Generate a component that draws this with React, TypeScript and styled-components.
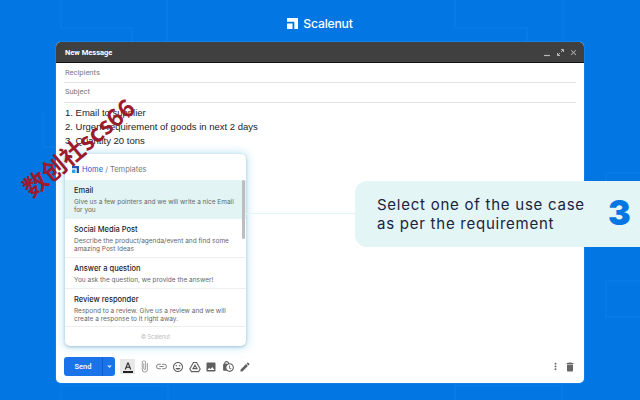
import React from "react";
import styled, { createGlobalStyle } from "styled-components";
import {
  MdArrowDropDown,
  MdAttachFile,
  MdClose,
  MdCreate,
  MdDelete,
  MdFormatColorText,
  MdInsertEmoticon,
  MdLink,
  MdLockClock,
  MdMoreVert,
  MdPhoto,
} from "react-icons/md";

const GlobalStyle = createGlobalStyle`
  html, body { margin: 0; padding: 0; }
  body { width: 640px; height: 400px; overflow: hidden; background: #0277e4; }
`;

const Page = styled.div`
  position: relative;
  width: 640px;
  height: 400px;
  overflow: hidden;
  background: #0277e4;
  display: flex;
  flex-direction: column;
  align-items: center;
  font-family: "Liberation Sans", Arial, sans-serif;
`;

const Pattern = styled.svg`
  position: absolute;
  inset: 0;
`;

const Brand = styled.div`
  position: relative;
  height: 42px;
  display: flex;
  align-items: center;
  gap: 5px;
  padding-top: 5px;
  box-sizing: border-box;
  color: #fff;
  font: 500 12.2px "Inter", sans-serif;
  letter-spacing: -0.2px;
`;

const Compose = styled.div`
  position: relative;
  width: 528px;
  height: 341px;
  background: #fff;
  border-radius: 5px;
  box-shadow: 0 0 1px rgba(210, 235, 250, 0.8);
  display: flex;
  flex-direction: column;
`;

const TitleBar = styled.div`
  height: 20px;
  background: #404040;
  border-bottom: 1px solid #111;
  border-radius: 5px 5px 0 0;
  display: flex;
  align-items: center;
  justify-content: space-between;
  padding: 0 6px 0 9px;
  color: #fff;
  font: 700 7.5px "Roboto", sans-serif;
`;

const WindowControls = styled.div`
  display: flex;
  align-items: center;
  gap: 4px;
  color: #b8b8b8;
`;

const FieldRow = styled.div`
  margin: 0 8px;
  padding-left: 1px;
  height: 20px;
  box-sizing: border-box;
  border-bottom: 1px solid #e4e4e4;
  display: flex;
  align-items: center;
  color: #777;
  font: 400 7.5px "Roboto", sans-serif;

  & + & {
    padding-bottom: 2px;
  }
`;

const MessageBody = styled.div`
  padding: 3px 9px 0;
  font-size: 9.5px;
  line-height: 14.2px;
  color: #222;
`;

const Popup = styled.div`
  position: absolute;
  left: 9px;
  top: 112px;
  width: 181px;
  height: 192px;
  box-sizing: border-box;
  background: #fff;
  border-radius: 5px;
  box-shadow: 0 1px 3px rgba(40, 90, 120, 0.3), 0 0 8px 2px rgba(150, 215, 240, 0.55);
  display: flex;
  flex-direction: column;
  font-family: "Inter", sans-serif;
  overflow: hidden;
`;

const Crumbs = styled.div`
  height: 26px;
  flex: none;
  display: flex;
  align-items: center;
  padding: 4px 0 0 7px;
  gap: 3px;
  box-sizing: border-box;
  font-size: 7.5px;
  color: #777;
`;

const HomeLink = styled.span`
  color: #1a58c8;
`;

const TemplateList = styled.div`
  position: relative;
  flex: 1;
`;

const TemplateItem = styled.div<{ $active?: boolean; $height: number }>`
  height: ${(p) => p.$height}px;
  box-sizing: border-box;
  padding: 6px 8px 0 9px;
  background: ${(p) => (p.$active ? "#e2f5f4" : "#fff")};
  border-bottom: 1px solid ${(p) => (p.$active ? "transparent" : "#eeeeee")};
`;

const TemplateName = styled.div`
  font-size: 7.5px;
  font-weight: 500;
  line-height: 10px;
  color: #1c2530;
`;

const TemplateText = styled.div`
  margin-top: 2px;
  font-size: 6.5px;
  line-height: 8px;
  color: #666;
`;

const ScrollThumb = styled.div`
  position: absolute;
  right: 1px;
  top: 0;
  width: 3px;
  height: 59px;
  background: #bdbdbd;
  border-radius: 2px;
`;

const PopupFooter = styled.div`
  height: 19px;
  flex: none;
  display: flex;
  align-items: center;
  justify-content: center;
  font-size: 5.5px;
  color: #bbb;
`;

const Toolbar = styled.div`
  margin-top: auto;
  height: 26px;
  padding: 0 8px;
  display: flex;
  align-items: flex-start;
  color: #666;
`;

const SendButton = styled.div`
  width: 51px;
  height: 19px;
  background: #1a73e8;
  border-radius: 3px;
  display: flex;
  color: #fff;
  font: 500 7.5px "Roboto", sans-serif;
`;

const SendLabel = styled.div`
  width: 38px;
  display: flex;
  align-items: center;
  justify-content: center;
  border-right: 1px solid #1560c0;
`;

const SendArrow = styled.div`
  flex: 1;
  display: flex;
  align-items: center;
  justify-content: center;
  color: #d7e6fb;
`;

const ToolIcons = styled.div`
  margin-left: 5px;
  display: flex;
  align-items: center;
  height: 19px;
`;

const ToolIcon = styled.div<{ $selected?: boolean; $faint?: boolean }>`
  width: 15px;
  height: 15px;
  margin-right: 1.8px;
  display: flex;
  align-items: center;
  justify-content: center;
  background: ${(p) => (p.$selected ? "#e8e8e8" : "transparent")};
  color: ${(p) => (p.$selected ? "#222" : p.$faint ? "#888" : "#5f5f5f")};
`;

const ToolEnd = styled.div`
  margin-left: auto;
  height: 19px;
  display: flex;
  align-items: center;
  gap: 3px;
`;

const Connector = styled.div`
  position: absolute;
  left: 246px;
  top: 213px;
  width: 110px;
  height: 1px;
  background: #e2f5f4;
`;

const Callout = styled.div`
  position: absolute;
  left: 355px;
  top: 181px;
  width: 285px;
  height: 66px;
  box-sizing: border-box;
  background: #e3f5f5;
  border-radius: 12px 0 0 12px;
  padding-left: 22px;
  display: flex;
  align-items: center;
`;

const CalloutText = styled.div`
  width: 212px;
  flex: none;
  font: 400 15px/19px "Inter", sans-serif;
  letter-spacing: 0.75px;
  color: #1b2340;
`;

const StepNumber = styled.div`
  margin-left: 19px;
  padding-bottom: 3px;
  font: 900 34px "Inter", sans-serif;
  color: #0277e4;
`;

const Watermark = styled.div`
  position: absolute;
  left: 78px;
  top: 147px;
  transform: translate(-50%, -50%) rotate(-40deg);
  color: #9c1a2c;
  font: 700 24px "Noto Sans CJK SC", "Liberation Sans", sans-serif;
  line-height: 28px;
  white-space: nowrap;
`;

function LogoMark({ size, dark }: { size: number; dark?: boolean }) {
  return (
    <svg width={size} height={size} viewBox="0 0 12 12">
      <path d="M0 0H12V12H8V4H0Z" fill={dark ? "#1c55b5" : "#fff"} />
      <path d="M0 6H6V12H0Z" fill={dark ? "#2aa5e0" : "#fff"} />
    </svg>
  );
}

function DriveIcon() {
  return (
    <svg width="12" height="12" viewBox="0 0 12 12" fill="none" stroke="currentColor" strokeWidth="1.1">
      <path d="M4.4 1.5H7.6L11.2 8L9.6 10.6H2.4L0.8 8Z" />
      <path d="M6 4.2L8 7.6H4Z" />
    </svg>
  );
}

const templates = [
  { name: "Email", text: "Give us a few pointers and we will write a nice Email for you", height: 39, active: true },
  { name: "Social Media Post", text: "Describe the product/agenda/event and find some amazing Post Ideas", height: 39 },
  { name: "Answer a question", text: "You ask the question, we provide the answer!", height: 31 },
  { name: "Review responder", text: "Respond to a review. Give us a review and we will create a response to it right away.", height: 38 },
];

export default function App() {
  return (
    <Page>
      <GlobalStyle />
      <Pattern width="640" height="400" fill="none" stroke="#0e7ee8" strokeWidth="1">
        <path d="M61 0V28H132V42M167 0V42" />
        <path d="M43 112V147H56" />
        <path d="M455 0V28H527V42M563 0V42" />
        <path d="M606 181V173H640M640 281H606V317H640" />
        <path d="M455 384V400M562 384V400M455 386H562" />
        <path d="M61 384V400M168 384V400M61 386H168" />
      </Pattern>
      <Brand>
        <LogoMark size={11} />
        Scalenut
      </Brand>
      <Compose>
        <TitleBar>
          New Message
          <WindowControls>
            <svg width="9" height="9" viewBox="0 0 9 9"><path d="M1 7.5H7" stroke="currentColor" strokeWidth="1.2" /></svg>
            <svg width="9" height="9" viewBox="0 0 9 9"><path d="M1.5 7.5L4 5M1.5 5V7.5H4M7.5 1.5L5 4M7.5 4V1.5H5" stroke="currentColor" fill="none" /></svg>
            <MdClose size={9} />
          </WindowControls>
        </TitleBar>
        <FieldRow>Recipients</FieldRow>
        <FieldRow>Subject</FieldRow>
        <MessageBody>
          <div>1. Email to supplier</div>
          <div>2. Urgent requirement of goods in next 2 days</div>
          <div>3. Quantity 20 tons</div>
        </MessageBody>
        <Popup>
          <Crumbs>
            <LogoMark size={7} dark />
            <span><HomeLink>Home</HomeLink> / Templates</span>
          </Crumbs>
          <TemplateList>
            {templates.map((t) => (
              <TemplateItem key={t.name} $active={t.active} $height={t.height}>
                <TemplateName>{t.name}</TemplateName>
                <TemplateText>{t.text}</TemplateText>
              </TemplateItem>
            ))}
            <ScrollThumb />
          </TemplateList>
          <PopupFooter>© Scalenut</PopupFooter>
        </Popup>
        <Toolbar>
          <SendButton>
            <SendLabel>Send</SendLabel>
            <SendArrow><MdArrowDropDown size={11} /></SendArrow>
          </SendButton>
          <ToolIcons>
            <ToolIcon $selected><MdFormatColorText size={12} /></ToolIcon>
            <ToolIcon $faint><MdAttachFile size={13} /></ToolIcon>
            <ToolIcon $faint><MdLink size={13} /></ToolIcon>
            <ToolIcon><MdInsertEmoticon size={12} /></ToolIcon>
            <ToolIcon><DriveIcon /></ToolIcon>
            <ToolIcon><MdPhoto size={12} /></ToolIcon>
            <ToolIcon><MdLockClock size={13} /></ToolIcon>
            <ToolIcon><MdCreate size={12} /></ToolIcon>
          </ToolIcons>
          <ToolEnd>
            <MdMoreVert size={11} />
            <MdDelete size={12} />
          </ToolEnd>
        </Toolbar>
      </Compose>
      <Connector />
      <Callout>
        <CalloutText>Select one of the use case as per the requirement</CalloutText>
        <StepNumber>3</StepNumber>
      </Callout>
      <Watermark>数创社scs66</Watermark>
    </Page>
  );
}
